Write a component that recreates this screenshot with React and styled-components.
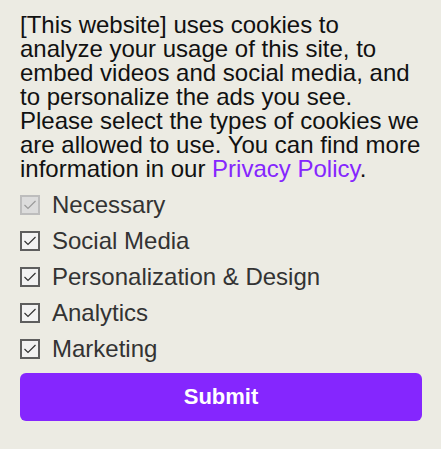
import React from "react";
import styled, { createGlobalStyle } from "styled-components";

const Global = createGlobalStyle`
  html, body { margin: 0; padding: 0; background: #ecebe3; }
  body { font-family: "Liberation Sans", Arial, sans-serif; }
`;

const Panel = styled.div`
  padding: 13px 19px 20px 20px;
  display: flex;
  flex-direction: column;
`;

const Text = styled.p`
  margin: 0;
  font-size: 24px;
  line-height: 24px;
  color: #111;
`;

const Link = styled.a`
  color: #8526fe;
  text-decoration: none;
`;

const List = styled.div`
  display: flex;
  flex-direction: column;
  margin-top: 6px;
`;

const Row = styled.label`
  display: flex;
  align-items: center;
  height: 36px;
  gap: 12px;
  font-size: 24px;
  color: #333;
`;

const Box = styled.span`
  box-sizing: border-box;
  width: 20px;
  height: 20px;
  border: 2px solid ${(p) => (p.$disabled ? "#bdbdbd" : "#5e5e5e")};
  background: ${(p) => (p.$disabled ? "#dcdcdc" : "#f2f2f2")};
  display: flex;
  align-items: center;
  justify-content: center;
  flex-shrink: 0;
`;

const Button = styled.button`
  margin-top: 6px;
  height: 48px;
  border: none;
  border-radius: 6px;
  background: #8526fe;
  color: #fff;
  font-family: "Liberation Sans", Arial, sans-serif;
  font-weight: bold;
  font-size: 22px;
  padding: 0;
`;

const Check = ({ disabled }) => (
  <Box $disabled={disabled}>
    <svg width="14" height="12" viewBox="0 0 14 12">
      <path
        d="M1.5 6 L5 9.5 L12.5 2"
        fill="none"
        stroke={disabled ? "#9a9a9a" : "#333"}
        strokeWidth="1.2"
      />
    </svg>
  </Box>
);

const items = [
  { label: "Necessary", disabled: true },
  { label: "Social Media" },
  { label: "Personalization & Design" },
  { label: "Analytics" },
  { label: "Marketing" },
];

export default function App() {
  return (
    <>
      <Global />
      <Panel>
        <Text>
          [This website] uses cookies to analyze your usage of this site, to
          embed videos and social media, and to personalize the ads you see.
          Please select the types of cookies we are allowed to use. You can
          find more information in our <Link href="#">Privacy Policy</Link>.
        </Text>
        <List>
          {items.map((it) => (
            <Row key={it.label}>
              <Check disabled={it.disabled} />
              {it.label}
            </Row>
          ))}
        </List>
        <Button>Submit</Button>
      </Panel>
    </>
  );
}
